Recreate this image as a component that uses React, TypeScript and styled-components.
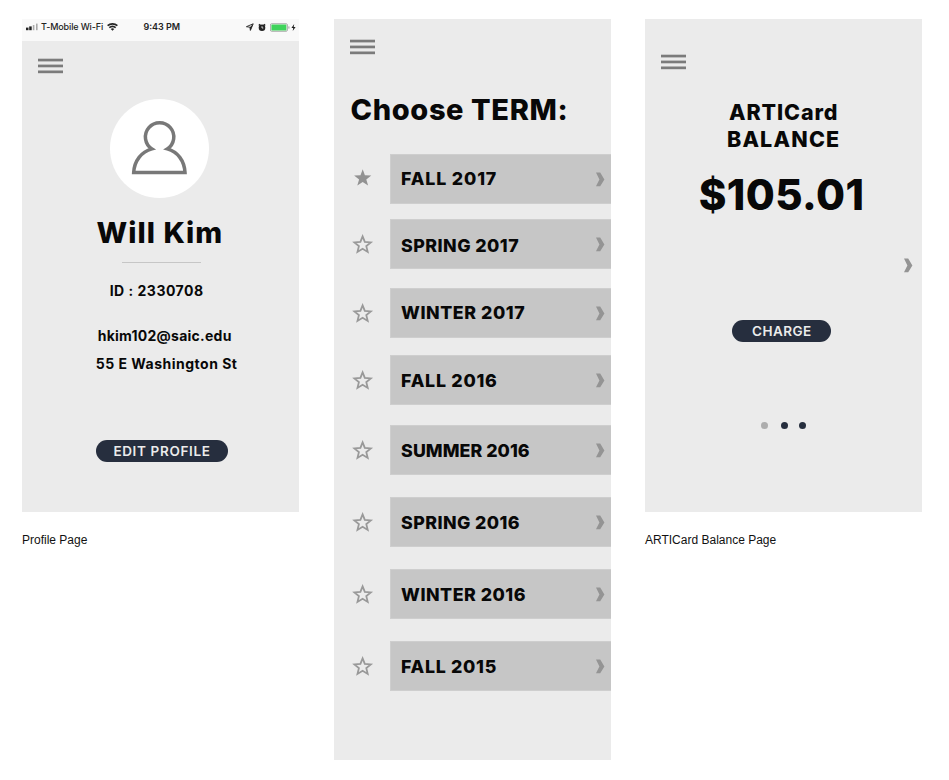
import React from 'react';
import styled, { createGlobalStyle } from 'styled-components';

const GlobalStyle = createGlobalStyle`
  * { box-sizing: border-box; }
  body { margin: 0; background: #fff; }
`;

const Board = styled.main`
  display: flex;
  justify-content: space-between;
  align-items: flex-start;
  width: 922px;
  padding: 19px 0 0 22px;
  font-family: Inter, 'Liberation Sans', sans-serif;
  color: #080808;
`;

const Column = styled.section`
  width: 277px;
`;

const Screen = styled.div<{ $height: number }>`
  display: flex;
  flex-direction: column;
  height: ${p => p.$height}px;
  background: #ebebeb;
  overflow: hidden;
`;

const Caption = styled.p`
  margin: 20px 0 0;
  font: 12px/16px 'Liberation Sans', Arial, sans-serif;
  color: #111;
`;

const StatusBar = styled.div`
  display: flex;
  align-items: center;
  height: 22px;
  padding: 0 0 6px 4px;
  background: #f9f9f9;
  flex: none;
`;

const StatusText = styled.span<{ $weight: number; $left: number; $track: number }>`
  margin-left: ${p => p.$left}px;
  font-size: 9px;
  line-height: 16px;
  font-weight: ${p => p.$weight};
  letter-spacing: ${p => p.$track}px;
  white-space: nowrap;
  color: #222;
`;

const StatusIcon = styled.svg<{ $left: number }>`
  display: block;
  flex: none;
  margin-left: ${p => p.$left}px;
`;

const MenuButton = styled.button<{ $top: number }>`
  display: flex;
  flex: none;
  width: 25px;
  height: 16px;
  margin: ${p => p.$top}px 0 0 16px;
  padding: 0;
  border: 0;
  background: none;
`;

const Label = styled.div<{ $size: number; $line: number; $x: number; $track: number; $top?: number; $weight?: number }>`
  flex: none;
  margin-top: ${p => p.$top ?? 0}px;
  padding-left: ${p => p.$x}px;
  font-size: ${p => p.$size}px;
  line-height: ${p => p.$line}px;
  letter-spacing: ${p => p.$track}px;
  font-weight: ${p => p.$weight ?? 700};
  white-space: nowrap;
`;

const Avatar = styled.div`
  flex: none;
  width: 99px;
  height: 99px;
  margin: 25px 0 0 87.5px;
  border-radius: 50%;
  background: #fff;
`;

const Divider = styled.hr`
  flex: none;
  width: 79px;
  height: 1px;
  margin: 11px 0 0 100px;
  border: 0;
  background: #c6c6c6;
`;

const Pill = styled.button<{ $width: number; $left: number; $top: number; $track: number; $inset: number }>`
  flex: none;
  width: ${p => p.$width}px;
  height: 22px;
  margin: ${p => p.$top}px 0 0 ${p => p.$left}px;
  padding: 0 0 0 ${p => p.$inset}px;
  border: 0;
  border-radius: 11px;
  background: #262e3e;
  color: #ebebeb;
  font: 600 13.5px/22px Inter, sans-serif;
  letter-spacing: ${p => p.$track}px;
  text-align: left;
  white-space: nowrap;
`;

const TermRow = styled.div<{ $gap: number }>`
  display: flex;
  flex: none;
  align-items: center;
  height: 50px;
  margin-top: ${p => p.$gap}px;
  padding-left: 18px;
`;

const StarBox = styled.svg`
  display: block;
  flex: none;
  width: 22px;
  height: 22px;
`;

const TermBar = styled.div`
  display: flex;
  align-items: center;
  justify-content: space-between;
  flex: 1;
  height: 50px;
  margin-left: 16px;
  padding: 0 6px 0 10.6px;
  border: 1px solid #cecece;
  border-right: 0;
  background: #c6c6c6;
`;

const TermName = styled.span<{ $track: number; $shift: number }>`
  font-size: 17.8px;
  line-height: 24px;
  font-weight: 800;
  letter-spacing: ${p => p.$track}px;
  padding-top: ${p => p.$shift}px;
  white-space: nowrap;
`;

const ChevronRow = styled.div`
  display: flex;
  flex: none;
  justify-content: flex-end;
  margin-top: 38px;
  padding-right: 9px;
`;

const Dots = styled.div`
  display: flex;
  flex: none;
  margin: 80px 0 0 116px;
`;

const Dot = styled.span<{ $tone: string; $after: number }>`
  width: 7px;
  height: 7px;
  margin-right: ${p => p.$after}px;
  border-radius: 50%;
  background: ${p => p.$tone};
`;

const Menu = ({ top }: { top: number }) => (
  <MenuButton $top={top} aria-label="Menu">
    <svg width="25" height="16" viewBox="0 0 25 16" fill="#7b7b7b">
      <rect y="0.7" width="25" height="2.7" />
      <rect y="6.6" width="25" height="2.7" />
      <rect y="12.5" width="25" height="2.7" />
    </svg>
  </MenuButton>
);

const Chevron = () => (
  <svg width="9" height="15" viewBox="0 0 9 15">
    <path d="M0 0.5H4.2L8.4 7.5L4.2 14.3H0L3.4 7.5Z" fill="#949494" />
  </svg>
);

const Star = ({ filled }: { filled?: boolean }) => (
  <StarBox viewBox="0 0 22 22">
    {filled ? (
      <path d="M10.7 1.2L12.9 7.2L19.3 7.4L14.3 11.4L16.1 17.6L10.7 14.1L5.3 17.6L7.1 11.4L2.1 7.4L8.5 7.2Z" fill="#929292" />
    ) : (
      <path
        d="M10.6 3.4L12.8 8.9L18.8 9.4L14.3 13.1L15.7 18.9L10.6 15.8L5.5 18.9L6.9 13.1L2.4 9.4L8.4 8.9Z"
        fill="none"
        stroke="#999"
        strokeWidth="1.8"
      />
    )}
  </StarBox>
);

const terms = [
  { name: 'FALL 2017', gap: 26, track: 0.85, shift: 0, filled: true },
  { name: 'SPRING 2017', gap: 15, track: 0.45, shift: 3 },
  { name: 'WINTER 2017', gap: 19, track: 0.55, shift: 0 },
  { name: 'FALL 2016', gap: 17, track: 0.75, shift: 1 },
  { name: 'SUMMER 2016', gap: 20, track: 0.05, shift: 1 },
  { name: 'SPRING 2016', gap: 22, track: 0.4, shift: 2 },
  { name: 'WINTER 2016', gap: 22, track: 0.5, shift: 1 },
  { name: 'FALL 2015', gap: 22, track: 0.7, shift: 2 },
];

const PhoneStatus = () => (
  <StatusBar>
    <StatusIcon $left={0} width="13" height="8" viewBox="0 0 13 8">
      <rect x="0" y="4.6" width="2.5" height="2.6" fill="#222" />
      <rect x="3.2" y="3.4" width="2.5" height="3.8" fill="#222" />
      <rect x="6.8" y="2" width="1.6" height="5.2" fill="#aaa" />
      <rect x="10" y="0.6" width="1.6" height="6.6" fill="#aaa" />
    </StatusIcon>
    <StatusText $weight={500} $left={2} $track={-0.13}>T-Mobile Wi-Fi</StatusText>
    <StatusIcon $left={4} width="11" height="8" viewBox="0 0 11 8" fill="none" stroke="#222" strokeWidth="1.6">
      <path d="M0.6 2.7C3.4 0.3 7.6 0.3 10.4 2.7" />
      <path d="M2.3 4.7C4.2 3.1 6.8 3.1 8.7 4.7" />
      <path d="M3.7 5.9Q5.5 4.7 7.3 5.9L5.5 7.7Z" fill="#222" stroke="none" />
    </StatusIcon>
    <StatusText $weight={600} $left={25.3} $track={0}>9:43 PM</StatusText>
    <StatusIcon $left={66.2} width="8" height="8" viewBox="0 0 8 8">
      <path d="M0.4 3.7L7.2 0.8L4.4 7.4L3.9 4.2Z" fill="#f9f9f9" stroke="#222" strokeWidth="0.9" />
      <path d="M3.9 4.2L7.2 0.8L4.4 7.4Z" fill="#222" />
    </StatusIcon>
    <StatusIcon $left={3.2} width="8" height="9" viewBox="0 0 8 9">
      <circle cx="4" cy="4.8" r="3.3" fill="#222" />
      <path d="M0.8 2.6L2.2 1.2M7.2 2.6L5.8 1.2" stroke="#222" strokeWidth="1.4" />
      <path d="M4 3.2V5H5.3" fill="none" stroke="#f9f9f9" strokeWidth="0.8" />
    </StatusIcon>
    <StatusIcon $left={4.2} width="27" height="9" viewBox="0 0 27 9">
      <rect x="0.4" y="0.7" width="17" height="7.6" rx="1.3" fill="#f9f9f9" stroke="#999" strokeWidth="0.8" />
      <rect x="1.4" y="1.6" width="15" height="5.8" rx="0.4" fill="#3fd35b" />
      <path d="M18.9 3.4V5.6" stroke="#999" strokeWidth="1" />
      <path d="M24.2 0.9L21.4 4.9H23.2L22.7 8L25.6 4H23.7Z" fill="#222" />
    </StatusIcon>
  </StatusBar>
);

export default function App() {
  return (
    <>
      <GlobalStyle />
      <Board>
        <Column>
          <Screen $height={493}>
            <PhoneStatus />
            <Menu top={17} />
            <Avatar>
              <svg width="99" height="99" viewBox="109.7 98.7 99 99">
                <path
                  d="M151.6 148.6A14.2 14.2 0 1 1 167 148.6C177.5 151.5 184 160.5 184.7 172.1H133.4C134.1 160.5 141 151.5 151.6 148.6Z"
                  fill="none"
                  stroke="#787878"
                  strokeWidth="3.5"
                />
              </svg>
            </Avatar>
            <Label $size={29} $line={36} $x={74.5} $track={1.05} $top={17} $weight={800}>Will Kim</Label>
            <Divider />
            <Label $size={14} $line={20} $x={87.7} $track={0.5} $top={18}>ID : 2330708</Label>
            <Label $size={14} $line={20} $x={75.7} $track={0.25} $top={25}>hkim102@saic.edu</Label>
            <Label $size={14} $line={20} $x={73.8} $track={0.5} $top={8}>55 E Washington St</Label>
            <Pill $width={132} $left={74} $top={66} $track={0.65} $inset={17.4}>EDIT PROFILE</Pill>
          </Screen>
          <Caption>Profile Page</Caption>
        </Column>

        <Column>
          <Screen $height={741}>
            <Menu top={20} />
            <Label $size={29} $line={36} $x={17} $track={0.62} $top={37} $weight={800}>Choose TERM:</Label>
            {terms.map(t => (
              <TermRow key={t.name} $gap={t.gap}>
                <Star filled={t.filled} />
                <TermBar>
                  <TermName $track={t.track} $shift={t.shift}>{t.name}</TermName>
                  <Chevron />
                </TermBar>
              </TermRow>
            ))}
          </Screen>
        </Column>

        <Column>
          <Screen $height={493}>
            <Menu top={35} />
            <Label $size={21.5} $line={26} $x={84} $track={0.9} $top={29} $weight={800}>ARTICard</Label>
            <Label $size={21.5} $line={26} $x={81.9} $track={1.2} $top={1} $weight={800}>BALANCE</Label>
            <Label $size={42} $line={50} $x={53.7} $track={0.4} $top={18} $weight={800}>$105.01</Label>
            <ChevronRow><Chevron /></ChevronRow>
            <Pill $width={99} $left={87} $top={47} $track={0.45} $inset={20}>CHARGE</Pill>
            <Dots>
              <Dot $tone="#adadad" $after={13} />
              <Dot $tone="#262e3e" $after={11} />
              <Dot $tone="#262e3e" $after={0} />
            </Dots>
          </Screen>
          <Caption>ARTICard Balance Page</Caption>
        </Column>
      </Board>
    </>
  );
}
